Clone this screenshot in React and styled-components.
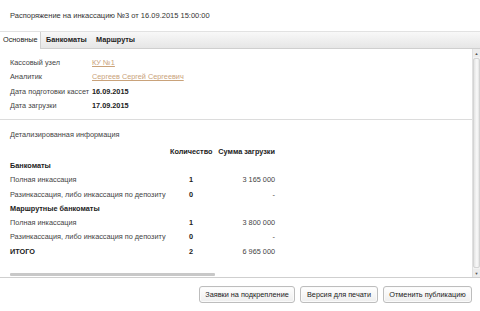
import React from 'react';
import styled, { createGlobalStyle } from 'styled-components';

const Global = createGlobalStyle`
  *, *::before, *::after { box-sizing: border-box; }
  html, body { margin: 0; padding: 0; background: #fff; }
  body { font-family: "Liberation Sans", Arial, sans-serif; color: #333; }
`;

const Page = styled.div`
  width: 480px;
  height: 311px;
  display: flex;
  flex-direction: column;
  overflow: hidden;
  background: #fff;
`;

const Title = styled.div`
  height: 31px;
  padding-left: 10px;
  font-size: 7.5px;
  line-height: 31px;
  color: #333;
`;

const Tabs = styled.div`
  height: 18px;
  display: flex;
  background: linear-gradient(#f8f8f8, #e6e6e6);
  border-top: 1px solid #e2e2e2;
  border-bottom: 1px solid #cfcfcf;
`;

const Tab = styled.div`
  width: ${(p) => p.$w}px;
  padding-left: ${(p) => (p.$active ? '3px' : '5px')};
  font-size: 7.3px;
  line-height: 16px;
  font-weight: ${(p) => (p.$active ? 'normal' : 'bold')};
  color: #222;
  background: ${(p) => (p.$active ? '#fff' : 'transparent')};
  border-right: ${(p) => (p.$active ? '1px solid #d0d0d0' : 'none')};
  margin-bottom: ${(p) => (p.$active ? '-1px' : '0')};
`;

const Body = styled.div`
  height: 229px;
  display: flex;
  border-bottom: 1px solid #cfcfcf;
`;

const Content = styled.div`
  flex: 1;
  display: flex;
  flex-direction: column;
`;

const VScroll = styled.div`
  width: 8px;
  display: flex;
  flex-direction: column;
  background: #f2f2f2;
  border-left: 1px solid #e0e0e0;
`;

const Arrow = styled.div`
  height: 8px;
  display: flex;
  align-items: center;
  justify-content: center;
  font-size: 4px;
  color: #555;
  background: #ececec;
`;

const Thumb = styled.div`
  flex: 1;
  margin: 1px 0;
  background: linear-gradient(90deg, #e4e4e4, #fafafa 60%, #e4e4e4);
  border: 1px solid #d4d4d4;
  border-radius: 2px;
`;

const Fields = styled.div`
  padding: 6px 0 6px 10px;
  display: grid;
  grid-template-columns: 82px auto;
  grid-auto-rows: 14.5px;
  align-items: center;
  font-size: 7.3px;
  border-bottom: 1px solid #dcdcdc;
`;

const Label = styled.span`
  color: #444;
`;

const Value = styled.span`
  color: #222;
  font-weight: ${(p) => (p.$bold ? 'bold' : 'normal')};
`;

const Link = styled.a`
  color: #c9a27a;
  text-decoration: underline;
`;

const Details = styled.div`
  flex: 1;
  padding: 8px 0 0 10px;
  font-size: 7.3px;
  display: flex;
  flex-direction: column;
`;

const Caption = styled.div`
  color: #444;
  height: 16px;
  line-height: 14px;
`;

const Table = styled.div`
  display: grid;
  grid-template-columns: 160px 42px 63px;
  grid-auto-rows: 14.3px;
  align-items: center;
`;

const Cell = styled.span`
  color: ${(p) => (p.$bold ? '#222' : '#444')};
  font-weight: ${(p) => (p.$bold ? 'bold' : 'normal')};
  text-align: ${(p) => p.$align || 'left'};
  white-space: nowrap;
`;

const HScroll = styled.div`
  margin: auto 0 1px 0;
  width: 205px;
  height: 3px;
  background: #c8c8c8;
  border-radius: 1px;
`;

const Footer = styled.div`
  flex: 1;
  display: flex;
  justify-content: flex-end;
  align-items: center;
  gap: 5px;
  padding-right: 8px;
`;

const Button = styled.button`
  height: 17px;
  width: ${(p) => p.$w}px;
  padding: 0;
  font-family: "Liberation Sans", Arial, sans-serif;
  font-size: 7.3px;
  color: #222;
  background: linear-gradient(#ffffff, #eeeeee);
  border: 1px solid #bdbdbd;
  border-radius: 3px;
  box-shadow: inset 0 0 0 1px #fafafa;
`;

const fields = [
  ['Кассовый узел', <Link key="a">КУ №1</Link>],
  ['Аналитик', <Link key="b">Сергеев Сергей Сергеевич</Link>],
  ['Дата подготовки кассет', <Value $bold>16.09.2015</Value>],
  ['Дата загрузки', <Value $bold>17.09.2015</Value>],
];

const rows = [
  { label: '', qty: 'Количество', sum: 'Сумма загрузки', head: true },
  { label: 'Банкоматы', group: true },
  { label: 'Полная инкассация', qty: '1', sum: '3 165 000' },
  { label: 'Разинкассация, либо инкассация по депозиту', qty: '0', sum: '-' },
  { label: 'Маршрутные банкоматы', group: true },
  { label: 'Полная инкассация', qty: '1', sum: '3 800 000' },
  { label: 'Разинкассация, либо инкассация по депозиту', qty: '0', sum: '-' },
  { label: 'ИТОГО', qty: '2', sum: '6 965 000', total: true },
];

export default function App() {
  return (
    <Page>
      <Global />
      <Title>Распоряжение на инкассацию №3 от 16.09.2015 15:00:00</Title>
      <Tabs>
        <Tab $active $w={41}>Основные</Tab>
        <Tab $w={50}>Банкоматы</Tab>
        <Tab $w={50}>Маршруты</Tab>
      </Tabs>
      <Body>
        <Content>
          <Fields>
            {fields.map(([l, v]) => (
              <React.Fragment key={l}>
                <Label>{l}</Label>
                {v}
              </React.Fragment>
            ))}
          </Fields>
          <Details>
            <Caption>Детализированная информация</Caption>
            <Table>
              {rows.map((r, i) => (
                <React.Fragment key={i}>
                  <Cell $bold={r.group || r.total}>{r.label}</Cell>
                  <Cell $bold={r.head || !r.group} $align={r.head ? 'right' : 'center'}>
                    {r.qty || ''}
                  </Cell>
                  <Cell $bold={r.head} $align="right">{r.sum || ''}</Cell>
                </React.Fragment>
              ))}
            </Table>
            <HScroll />
          </Details>
        </Content>
        <VScroll>
          <Arrow>▲</Arrow>
          <Thumb />
          <Arrow>▼</Arrow>
        </VScroll>
      </Body>
      <Footer>
        <Button $w={96}>Заявки на подкрепление</Button>
        <Button $w={78}>Версия для печати</Button>
        <Button $w={89}>Отменить публикацию</Button>
      </Footer>
    </Page>
  );
}
